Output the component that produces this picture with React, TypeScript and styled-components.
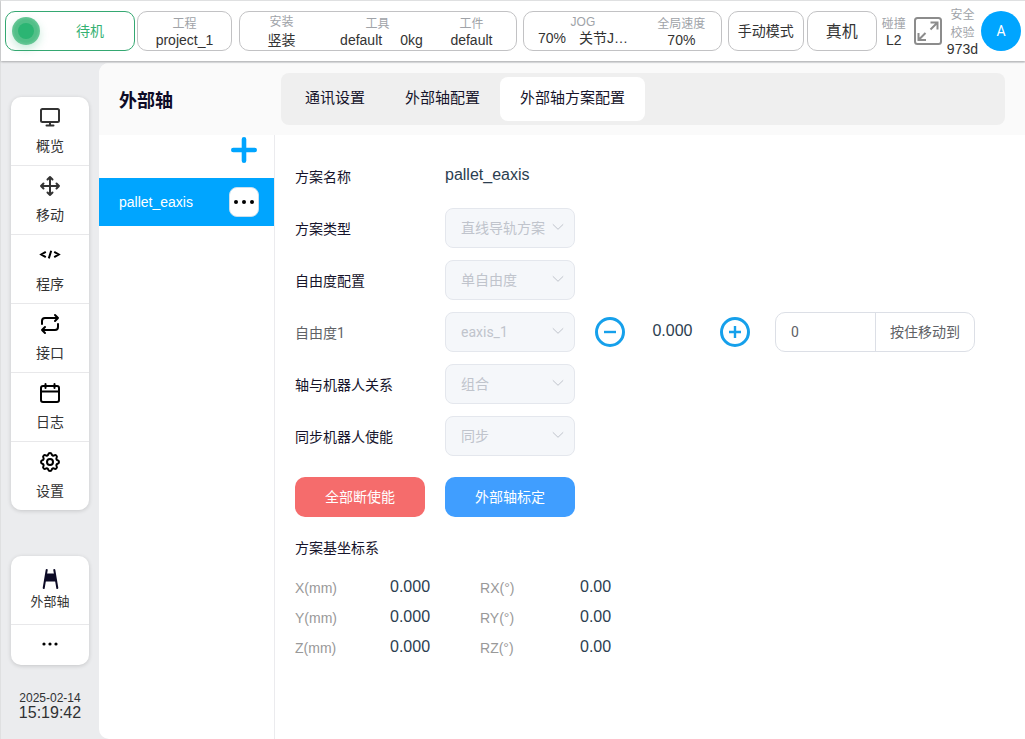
import React from 'react';
import styled, { createGlobalStyle } from 'styled-components';

const latin = '"Liberation Sans", "Noto Sans CJK SC", sans-serif';
const control = 'Roboto, "Noto Sans CJK SC", sans-serif';

const GlobalStyle = createGlobalStyle`
  * { box-sizing: border-box; }
  body { margin: 0; background: #ebecee; font-family: ${latin}; color: #333; }
  button, input, select { font: inherit; color: inherit; margin: 0; padding: 0; }
  button { cursor: pointer; border: 0; background: none; }
  a { color: inherit; text-decoration: none; }
  svg { display: block; flex: none; }
`;

const Page = styled.div`
  display: flex;
  flex-direction: column;
  min-height: 100vh;
  border-left: 1px solid #dfe0e1;
`;

const Header = styled.header`
  display: flex;
  align-items: center;
  height: 61px;
  padding: 0 4px;
  background: #fff;
  border-top: 1px solid #dfe0e1;
  box-shadow: 0 1px 2px rgba(0, 0, 0, 0.28);
  z-index: 1;
`;

const Pill = styled.div<{ $w: number; $gap: number; $pad?: number }>`
  display: flex;
  flex: ${p => p.$w} 1 ${p => p.$w}px;
  align-items: center;
  justify-content: center;
  height: 40px;
  margin-right: ${p => p.$gap}px;
  padding-right: ${p => p.$pad ?? 0}px;
  border: 1px solid #c2c2c4;
  border-radius: 10px;
  font-size: 14px;
`;

const StatusPill = styled(Pill)`
  justify-content: flex-start;
  padding-left: 6px;
  border-color: #35a872;
  color: #35b173;
`;

const StatusLabel = styled.span`
  flex: 1;
  padding-left: 6px;
  text-align: center;
  line-height: 20px;
`;

const Lamp = styled.span`
  display: flex;
  align-items: center;
  justify-content: center;
  width: 28px;
  height: 28px;
  border-radius: 50%;
  background: radial-gradient(circle, #52bf88 55%, #93d8b5 100%);
  box-shadow: 0 4px 8px rgba(43, 179, 115, 0.25);
  &::after {
    content: '';
    width: 16px;
    height: 16px;
    border-radius: 50%;
    background: #2bb573;
  }
`;

const ModeButton = styled.button<{ $w: number; $gap: number; $size: number }>`
  flex: ${p => p.$w} 1 ${p => p.$w}px;
  height: 40px;
  margin-right: ${p => p.$gap}px;
  padding-bottom: 2px;
  border: 1px solid #c2c2c4;
  border-radius: 10px;
  font-size: ${p => p.$size}px;
  white-space: nowrap;
`;

type Align = 'low' | 'high' | 'spread';

const Stat = styled.div<{ $w?: number; $align?: Align }>`
  display: flex;
  flex: ${p => (p.$w ? `${p.$w} 1 ${p.$w}px` : 'none')};
  flex-direction: column;
  align-items: center;
  gap: ${p => (p.$align === 'spread' ? 2 : 0)}px;
  padding-top: ${p => (p.$align === 'low' ? 2 : 0)}px;
  padding-bottom: ${p => (p.$align === 'high' ? 2 : 0)}px;
  font-size: 14px;
  line-height: 16px;
  white-space: nowrap;
  & + & { position: relative; }
  & + &::before {
    content: '';
    position: absolute;
    left: 0;
    top: 4px;
    width: 1px;
    height: 24px;
    background: #ccc;
  }
`;

const StatLabel = styled.span`
  color: #a0a3a8;
  font-size: 12px;
  line-height: 16px;
`;

const CheckStat = styled.div`
  display: flex;
  flex: none;
  flex-direction: column;
  align-items: center;
  font-size: 14px;
  line-height: 14px;
  ${StatLabel} { line-height: 18px; }
`;

const StatValues = styled.span<{ $gap?: number; $indent?: number }>`
  display: flex;
  gap: ${p => p.$gap ?? 0}px;
  padding-left: ${p => p.$indent ?? 0}px;
`;

const ExpandButton = styled.button`
  margin: 0 4px 0 7px;
`;

const Avatar = styled.button`
  flex: none;
  width: 40px;
  height: 40px;
  margin-left: 3px;
  border-radius: 50%;
  background: #00a5ff;
  color: #fff;
  font: 14px ${control};
`;

const Body = styled.div`
  display: flex;
  flex: 1;
  padding-top: 2px;
`;

const Sidebar = styled.aside`
  display: flex;
  flex: none;
  flex-direction: column;
  width: 98px;
  padding: 34px 10px 16px;
`;

const NavCard = styled.nav`
  overflow: hidden;
  border-radius: 10px;
  background: #fff;
  box-shadow: 0 1px 4px rgba(0, 0, 0, 0.16);
  & + & { margin-top: 46px; }
`;

const NavItem = styled.a<{ $compact?: boolean; $h: number }>`
  display: flex;
  flex-direction: column;
  align-items: center;
  justify-content: center;
  box-sizing: content-box;
  gap: ${p => (p.$compact ? 1 : 7)}px;
  height: ${p => p.$h - 2}px;
  padding-bottom: 2px;
  font-size: ${p => (p.$compact ? 13 : 14)}px;
  line-height: 20px;
  & + & { border-top: 1px solid #e8e8ea; }
`;

const Clock = styled.div`
  margin-top: 26px;
  font-size: 16px;
  line-height: 16px;
  text-align: center;
  color: #303133;
`;

const ClockDate = styled.div`
  font-size: 12px;
  line-height: 14px;
`;

const Main = styled.main`
  display: flex;
  flex: 1;
  flex-direction: column;
  min-width: 0;
  overflow: hidden;
  border-radius: 10px 0 0 10px;
  background: #fff;
`;

const TitleBar = styled.div`
  display: flex;
  align-items: center;
  height: 72px;
  padding-right: 20px;
  background: #fafafa;
`;

const Title = styled.h1`
  flex: none;
  width: 182px;
  margin: 0;
  padding: 4px 0 0 20px;
  color: #0d0b26;
  font-size: 18px;
  line-height: 24px;
`;

const Tabs = styled.div`
  display: flex;
  flex: 1;
  height: 52px;
  padding: 4px;
  border-radius: 8px;
  background: #efefef;
`;

const Tab = styled.button<{ $active?: boolean }>`
  height: 44px;
  padding: 0 20px 6px;
  border-radius: 8px;
  background: ${p => (p.$active ? '#fff' : 'transparent')};
  color: #16142b;
  font-size: 15px;
`;

const Content = styled.div`
  display: flex;
  flex: 1;
`;

const SchemeList = styled.section`
  flex: none;
  width: 176px;
  border-right: 1px solid #ebebee;
`;

const ListTools = styled.div`
  display: flex;
  justify-content: flex-end;
  height: 43px;
  padding: 2px 17px 0 0;
`;

const AddButton = styled.button`
  height: 26px;
  color: #00a5ff;
`;

const SchemeItem = styled.div`
  display: flex;
  align-items: center;
  justify-content: space-between;
  height: 48px;
  padding: 0 15px 0 20px;
  background: #00a5ff;
  color: #fff;
  font-size: 14px;
`;

const MoreButton = styled.button`
  display: flex;
  align-items: center;
  justify-content: center;
  width: 30px;
  height: 30px;
  border: 1px solid #c9dfee;
  border-radius: 8px;
  background: #fff;
  color: #000;
`;

const Form = styled.section`
  flex: 1;
  min-width: 0;
  padding: 21px 20px;
`;

const Row = styled.div`
  display: flex;
  align-items: center;
  height: 40px;
  margin-bottom: 12px;
`;

const RowLabel = styled.label<{ $muted?: boolean }>`
  flex: none;
  width: 150px;
  padding-top: 2px;
  color: ${p => (p.$muted ? '#606266' : '#16142b')};
  font-family: ${p => (p.$muted ? control : latin)};
  font-size: 14px;
  line-height: 20px;
`;

const Value = styled.output`
  color: #2c3e50;
  font-size: 16px;
  line-height: 20px;
  padding-bottom: 2px;
`;

const SelectBox = styled.div`
  position: relative;
  flex: none;
  width: 130px;
  height: 40px;
  svg {
    position: absolute;
    right: 10px;
    top: 12px;
    pointer-events: none;
  }
`;

const Select = styled.select`
  appearance: none;
  width: 100%;
  height: 100%;
  padding: 0 24px 0 15px;
  border: 1px solid #e4e7ed;
  border-radius: 8px;
  background: #f5f7fa;
  color: #c0c4cc;
  font: 14px ${control};
  &:disabled { opacity: 1; }
`;

const Jog = styled.div`
  display: flex;
  align-items: center;
  margin-left: 20px;
`;

const JogValue = styled(Value)`
  width: 95px;
  text-align: center;
`;

const MoveTo = styled.div`
  display: flex;
  width: 200px;
  height: 40px;
  margin-left: 25px;
  border: 1px solid #dcdfe6;
  border-radius: 10px;
  color: #606266;
  font: 14px ${control};
`;

const MoveInput = styled.input`
  flex: 1;
  min-width: 0;
  padding: 0 15px;
  border: 0;
  background: none;
  outline: 0;
`;

const MoveButton = styled.button`
  flex: none;
  padding: 0 14px 2px;
  border-left: 1px solid #dcdfe6;
`;

const Actions = styled.div`
  display: flex;
  gap: 20px;
  margin-top: 21px;
`;

const Action = styled.button<{ $color: string }>`
  width: 130px;
  height: 40px;
  padding-bottom: 2px;
  border-radius: 10px;
  background: ${p => p.$color};
  color: #fff;
  font: 14px ${control};
`;

const SubTitle = styled.h2`
  margin: 21px 0 14px;
  color: #16142b;
  font-size: 14px;
  font-weight: 400;
  line-height: 20px;
`;

const Coords = styled.table`
  border-collapse: collapse;
  th, td { height: 30px; padding: 0; text-align: left; vertical-align: middle; }
  th { width: 95px; padding-top: 1px; color: #999; font-size: 14px; font-weight: 400; }
  td { width: 90px; color: #2c3e50; font-size: 16px; }
  td + th { width: 100px; }
`;

const LineIcon = ({ d, color = '#000', children }: { d: string; color?: string; children?: React.ReactNode }) => (
  <svg width="24" height="24" viewBox="0 0 24 24" fill="none" stroke={color} strokeWidth="2" strokeLinecap="round" strokeLinejoin="round">
    <path d={d} />
    {children}
  </svg>
);

const MonitorIcon = () => (
  <LineIcon color="#333" d="M12 17v3M8.500 20.500h7"><rect x="3" y="4" width="18" height="13" rx="1.500" /></LineIcon>
);

const MoveIcon = () => (
  <LineIcon color="#333" d="M3 12h18M12 3v18M18.500 9.500 21 12l-2.500 2.500M5.500 9.500 3 12l2.500 2.500M9.500 18.500 12 21l2.500-2.500M14.500 5.500 12 3 9.500 5.500" />
);

const RepeatIcon = () => (
  <LineIcon d="M4 12V9a3 3 0 0 1 3-3h13m-3-3 3 3-3 3M20 12v3a3 3 0 0 1-3 3H4m3 3-3-3 3-3" />
);

const CalendarIcon = () => (
  <LineIcon d="M5 5h14a2 2 0 0 1 2 2v12a2 2 0 0 1-2 2H5a2 2 0 0 1-2-2V7a2 2 0 0 1 2-2zM16.500 3v4M7.500 3v4M3 10.500h18" />
);

const CodeIcon = () => (
  <svg width="24" height="24" viewBox="0 0 24 24" fill="none" stroke="#000" strokeWidth="2">
    <path d="M7.800 8.800 3.200 11.500l4.600 2.700M16.200 8.800l4.600 2.700-4.600 2.700M13.200 7.800l-2.400 7.600" />
  </svg>
);

const GearIcon = () => (
  <LineIcon d="M10.325 4.317c.426-1.756 2.924-1.756 3.35 0a1.724 1.724 0 0 0 2.573 1.066c1.543-.94 3.31.826 2.37 2.37a1.724 1.724 0 0 0 1.065 2.572c1.756.426 1.756 2.924 0 3.35a1.724 1.724 0 0 0-1.066 2.573c.94 1.543-.826 3.31-2.37 2.37a1.724 1.724 0 0 0-2.572 1.065c-.426 1.756-2.924 1.756-3.35 0a1.724 1.724 0 0 0-2.573-1.066c-1.543.94-3.31-.826-2.37-2.37a1.724 1.724 0 0 0-1.065-2.572c-1.756-.426-1.756-2.924 0-3.35a1.724 1.724 0 0 0 1.066-2.573c-.94-1.543.826-3.31 2.37-2.37 1 .608 2.296.07 2.572-1.065z">
    <circle cx="12" cy="12" r="3" />
  </LineIcon>
);

const AxisIcon = () => (
  <svg width="24" height="24" viewBox="0 0 24 24" fill="#0d0b26" stroke="#0d0b26">
    <path d="M8.700 3 5.700 21M16.300 3l3 18" strokeWidth="2" strokeLinecap="round" />
    <path d="M8 6.500h9l1.500 8h-12z" stroke="none" />
  </svg>
);

const DotsIcon = ({ step = 6, r = 2 }: { step?: number; r?: number }) => (
  <svg width="24" height="8" viewBox="0 0 24 8" fill="#000">
    {[-1, 0, 1].map(i => <circle key={i} cx={12 + i * step} cy="4" r={r} />)}
  </svg>
);

const ExpandIcon = () => (
  <svg width="30" height="30" viewBox="0 0 30 30" fill="none" stroke="#8c8c8c" strokeWidth="2">
    <rect x="2" y="2" width="26" height="26" rx="2.500" />
    <path d="M17.500 6.500h7v7M24 7l-6.500 6.500M5.500 17v7h7.500M6 23.500l6.500-6.500" />
  </svg>
);

const PlusIcon = () => (
  <svg width="26" height="26" viewBox="0 0 26 26" stroke="currentColor" strokeWidth="4.600" strokeLinecap="round">
    <path d="M2.300 13h21.400M13 2.300v21.400" />
  </svg>
);

const StepIcon = ({ plus }: { plus?: boolean }) => (
  <svg width="30" height="30" viewBox="0 0 30 30" fill="none" stroke="#16a0eb">
    <circle cx="15" cy="15" r="13.500" strokeWidth="3" />
    <path d={plus ? 'M9 15h12M15 9v12' : 'M9 15h12'} strokeWidth="2.400" />
  </svg>
);

const ChevronIcon = () => (
  <svg width="14" height="14" viewBox="0 0 14 14" fill="none" stroke="#c0c4cc">
    <path d="m1.800 4.300 5.200 5 5.200-5" />
  </svg>
);

type HeaderStatProps = { label: string; values: string[]; w?: number; gap?: number; indent?: number; align?: Align };

const HeaderStat = ({ label, values, w, gap, indent, align = 'low' }: HeaderStatProps) => (
  <Stat $w={w} $align={align}>
    <StatLabel>{label}</StatLabel>
    <StatValues $gap={gap} $indent={indent}>{values.map(v => <span key={v}>{v}</span>)}</StatValues>
  </Stat>
);

const SelectField = ({ id, value }: { id: string; value: string }) => (
  <SelectBox>
    <Select id={id} disabled defaultValue={value}><option>{value}</option></Select>
    <ChevronIcon />
  </SelectBox>
);

const navItems = [
  { label: '概览', icon: <MonitorIcon /> },
  { label: '移动', icon: <MoveIcon /> },
  { label: '程序', icon: <CodeIcon /> },
  { label: '接口', icon: <RepeatIcon /> },
  { label: '日志', icon: <CalendarIcon /> },
  { label: '设置', icon: <GearIcon /> },
];

const fields = [
  { id: 'type', label: '方案类型', value: '直线导轨方案' },
  { id: 'dof', label: '自由度配置', value: '单自由度' },
  { id: 'dof1', label: '自由度1', value: 'eaxis_1', jog: true },
  { id: 'relation', label: '轴与机器人关系', value: '组合' },
  { id: 'sync', label: '同步机器人使能', value: '同步' },
];

export default function App() {
  return (
    <Page>
      <GlobalStyle />
      <Header>
        <StatusPill $w={130} $gap={2}>
          <Lamp />
          <StatusLabel>待机</StatusLabel>
        </StatusPill>
        <Pill $w={95} $gap={7}><HeaderStat label="工程" values={['project_1']} /></Pill>
        <Pill $w={278} $gap={6} $pad={5}>
          <HeaderStat w={83} align="spread" label="安装" values={['竖装']} />
          <HeaderStat w={109} gap={18} indent={8} label="工具" values={['default', '0kg']} />
          <HeaderStat w={79} label="工件" values={['default']} />
        </Pill>
        <Pill $w={199} $gap={6}>
          <HeaderStat w={118} gap={13} align="high" label="JOG" values={['70%', '关节J…']} />
          <HeaderStat w={79} label="全局速度" values={['70%']} />
        </Pill>
        <ModeButton $w={76} $gap={3} $size={14}>手动模式</ModeButton>
        <ModeButton $w={70} $gap={5} $size={16}>真机</ModeButton>
        <HeaderStat label="碰撞" values={['L2']} />
        <ExpandButton aria-label="全屏"><ExpandIcon /></ExpandButton>
        <CheckStat>
          <StatLabel>安全</StatLabel>
          <StatLabel>校验</StatLabel>
          <span>973d</span>
        </CheckStat>
        <Avatar>A</Avatar>
      </Header>
      <Body>
        <Sidebar>
          <NavCard>
            {navItems.map(item => (
              <NavItem key={item.label} href="#" $h={68}>{item.icon}{item.label}</NavItem>
            ))}
          </NavCard>
          <NavCard>
            <NavItem href="#" $compact $h={68}><AxisIcon />外部轴</NavItem>
            <NavItem href="#" $h={40} aria-label="更多"><DotsIcon r={1.6} /></NavItem>
          </NavCard>
          <Clock>
            <ClockDate>2025-02-14</ClockDate>
            15:19:42
          </Clock>
        </Sidebar>
        <Main>
          <TitleBar>
            <Title>外部轴</Title>
            <Tabs role="tablist">
              <Tab role="tab">通讯设置</Tab>
              <Tab role="tab">外部轴配置</Tab>
              <Tab role="tab" aria-selected $active>外部轴方案配置</Tab>
            </Tabs>
          </TitleBar>
          <Content>
            <SchemeList>
              <ListTools><AddButton aria-label="新增"><PlusIcon /></AddButton></ListTools>
              <SchemeItem>
                pallet_eaxis
                <MoreButton aria-label="更多"><DotsIcon step={8} /></MoreButton>
              </SchemeItem>
            </SchemeList>
            <Form>
              <Row>
                <RowLabel htmlFor="name">方案名称</RowLabel>
                <Value id="name">pallet_eaxis</Value>
              </Row>
              {fields.map(f => (
                <Row key={f.id}>
                  <RowLabel htmlFor={f.id} $muted={f.jog}>{f.label}</RowLabel>
                  <SelectField id={f.id} value={f.value} />
                  {f.jog && (
                    <Jog>
                      <button aria-label="减"><StepIcon /></button>
                      <JogValue>0.000</JogValue>
                      <button aria-label="加"><StepIcon plus /></button>
                      <MoveTo>
                        <MoveInput aria-label="目标位置" defaultValue="0" />
                        <MoveButton>按住移动到</MoveButton>
                      </MoveTo>
                    </Jog>
                  )}
                </Row>
              ))}
              <Actions>
                <Action $color="#f56c6c">全部断使能</Action>
                <Action $color="#409eff">外部轴标定</Action>
              </Actions>
              <SubTitle>方案基坐标系</SubTitle>
              <Coords>
                <tbody>
                  {['X', 'Y', 'Z'].map(axis => (
                    <tr key={axis}>
                      <th scope="row">{axis}(mm)</th>
                      <td>0.000</td>
                      <th scope="row">R{axis}(°)</th>
                      <td>0.00</td>
                    </tr>
                  ))}
                </tbody>
              </Coords>
            </Form>
          </Content>
        </Main>
      </Body>
    </Page>
  );
}
